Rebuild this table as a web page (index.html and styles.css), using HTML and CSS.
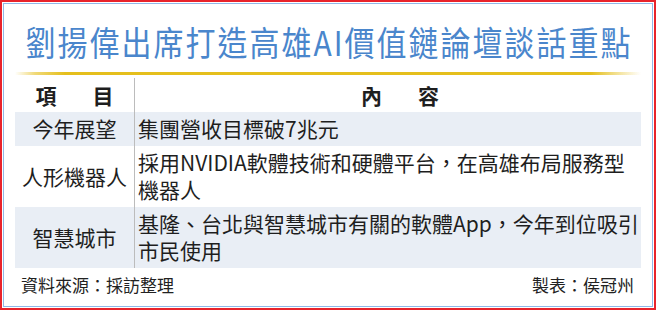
FILE: index.html
```html
<!DOCTYPE html>
<html lang="zh-Hant">
<head>
<meta charset="utf-8">
<link rel="stylesheet" href="styles.css">
</head>
<body>
<div class="frame">
  <div class="panel">
    <h1 class="title"><span class="title-text">劉揚偉出席打造高雄AI價值鏈論壇談話重點</span></h1>
    <div class="rule"></div>
    <div class="table">
      <div class="row head">
        <div class="label"><span>項</span><span>目</span></div>
        <div class="content"><span>內</span><span>容</span></div>
      </div>
      <div class="row shade">
        <div class="label">今年展望</div>
        <div class="content">集團營收目標破7兆元</div>
      </div>
      <div class="row">
        <div class="label">人形機器人</div>
        <div class="content">採用NVIDIA軟體技術和硬體平台，在高雄布局服務型機器人</div>
      </div>
      <div class="row shade">
        <div class="label">智慧城市</div>
        <div class="content">基隆、台北與智慧城市有關的軟體App，今年到位吸引市民使用</div>
      </div>
    </div>
    <div class="footer">
      <span>資料來源：採訪整理</span>
      <span>製表：侯冠州</span>
    </div>
  </div>
</div>
</body>
</html>
```

FILE: styles.css
```css
html, body {
  margin: 0;
  padding: 0;
  background: #ffffff;
}

body {
  font-family: "Noto Sans CJK TC", "Noto Sans", sans-serif;
  color: #1e1e1e;
}

.frame {
  width: 656px;
  height: 310px;
  box-sizing: border-box;
  border: 2px solid #e8232b;
  padding: 1px;
  background: #fff;
}

.panel {
  height: 100%;
  box-sizing: border-box;
  border: 1px solid #8fb8e8;
  padding: 17px 11px 0 11px;
  display: flex;
  flex-direction: column;
}

.title {
  margin: 0;
  height: 40px;
  line-height: 40px;
  font-size: 30px;
  font-weight: 400;
  color: #4a86cc;
  display: flex;
  justify-content: center;
  white-space: nowrap;
}

.title-text {
  display: block;
  letter-spacing: 2px;
  margin-right: -2px;
  transform: scaleY(1.12);
}

.rule {
  margin-top: 11px;
  height: 3px;
  background: linear-gradient(to right,
    rgba(230, 192, 30, 0) 0,
    rgba(230, 192, 30, 0.6) 20px,
    #e5bf1c 50px,
    #e5bf1c calc(100% - 50px),
    rgba(230, 192, 30, 0.4) calc(100% - 20px),
    rgba(230, 192, 30, 0) 100%);
}

.table {
  margin-top: 2px;
  display: flex;
  flex-direction: column;
}

.row {
  display: flex;
  font-size: 21px;
  line-height: 27px;
}

.row.shade {
  background: #e9eef5;
}

.label {
  width: 119px;
  flex: none;
  display: flex;
  align-items: center;
  justify-content: center;
  padding: 3px 0 4px;
}

.content {
  flex: 1;
  border-left: 1px solid #bcbcbc;
  padding: 3px 2px 4px 3px;
}

.row.head {
  font-weight: 700;
  padding-top: 1px;
}

.row.head .label {
  gap: 36px;
  padding: 4px 0 3px;
}

.row.head .content {
  display: flex;
  justify-content: center;
  gap: 36px;
  padding: 4px 0 3px 24px;
}

.footer {
  display: flex;
  justify-content: space-between;
  padding: 6px 7px 0 6px;
  font-size: 17px;
  line-height: 22px;
  color: #222;
}
```
